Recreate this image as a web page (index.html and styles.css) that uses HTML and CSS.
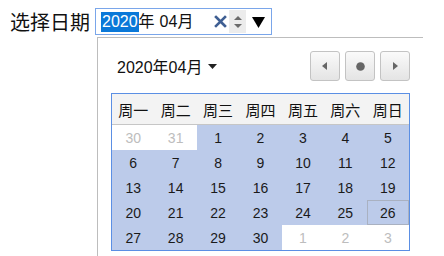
FILE: index.html
```html
<!DOCTYPE html>
<html lang="zh-CN">
<head>
<meta charset="utf-8">
<title>选择日期</title>
<link rel="stylesheet" href="styles.css">
</head>
<body>
<div class="field">
  <label class="label">选择日期</label>
  <div class="picker">
    <div class="input">
      <span class="seg sel">2020</span><span class="seg">年</span><span class="seg sp">04</span><span class="seg">月</span>
      <span class="clear"><svg width="13" height="13" viewBox="0 0 13 13"><path d="M2 2 L11 11 M11 2 L2 11" stroke="#3f5f93" stroke-width="2.6" stroke-linecap="square"/></svg></span>
      <span class="spin"><svg width="10" height="18" viewBox="0 0 10 18"><path d="M1 7 L5 3 L9 7 Z M1 11 L5 15 L9 11 Z" fill="#6b6b6b"/></svg></span>
      <span class="drop"><svg width="13" height="11" viewBox="0 0 13 11"><path d="M0 0 H13 L6.5 11 Z" fill="#000"/></svg></span>
    </div>
    <div class="popup">
      <div class="head">
        <div class="month">2020年04月 <svg class="caret" width="9" height="5" viewBox="0 0 9 5"><path d="M0 0 H9 L4.5 5 Z" fill="#222"/></svg></div>
        <div class="nav">
          <button class="btn"><svg width="6" height="8" viewBox="0 0 6 8"><path d="M5 0 V8 L0 4 Z" fill="#666"/></svg></button>
          <button class="btn"><svg width="9" height="9" viewBox="0 0 9 9"><circle cx="4.5" cy="4.5" r="4.3" fill="#666"/></svg></button>
          <button class="btn"><svg width="6" height="8" viewBox="0 0 6 8"><path d="M1 0 V8 L6 4 Z" fill="#666"/></svg></button>
        </div>
      </div>
      <div class="cal">
        <div class="wk">周一</div><div class="wk">周二</div><div class="wk">周三</div><div class="wk">周四</div><div class="wk">周五</div><div class="wk">周六</div><div class="wk">周日</div>
        <div class="d out">30</div><div class="d out">31</div><div class="d in">1</div><div class="d in">2</div><div class="d in">3</div><div class="d in">4</div><div class="d in">5</div>
        <div class="d in">6</div><div class="d in">7</div><div class="d in">8</div><div class="d in">9</div><div class="d in">10</div><div class="d in">11</div><div class="d in">12</div>
        <div class="d in">13</div><div class="d in">14</div><div class="d in">15</div><div class="d in">16</div><div class="d in">17</div><div class="d in">18</div><div class="d in">19</div>
        <div class="d in">20</div><div class="d in">21</div><div class="d in">22</div><div class="d in">23</div><div class="d in">24</div><div class="d in">25</div><div class="d in today">26</div>
        <div class="d in">27</div><div class="d in">28</div><div class="d in">29</div><div class="d in">30</div><div class="d out">1</div><div class="d out">2</div><div class="d out">3</div>
      </div>
    </div>
  </div>
</div>
</body>
</html>
```
FILE: styles.css
```css
html, body {
  margin: 0;
  padding: 0;
  background: #fff;
  width: 444px;
  height: 256px;
  overflow: hidden;
}
body {
  font-family: "Liberation Sans", "Noto Sans CJK SC", sans-serif;
  color: #111;
}
.field {
  display: flex;
  align-items: center;
  padding: 8px 0 0 10px;
}
.label {
  font-family: "Noto Sans CJK SC", sans-serif;
  font-size: 20px;
  line-height: 27px;
  margin-right: 5px;
  color: #111;
}
.picker {
  position: relative;
}
.input {
  box-sizing: border-box;
  width: 177px;
  height: 27px;
  border: 1px solid #7aa6ea;
  display: flex;
  align-items: center;
  padding-left: 5px;
  font-size: 16px;
  font-family: "Liberation Sans", "Noto Sans CJK SC", sans-serif;
}
.seg {
  line-height: 20px;
}
.seg.sel {
  background: #0a78d8;
  color: #fff;
  padding: 0 1px;
}
.seg.sp {
  margin-left: 5px;
}
.clear {
  margin-left: auto;
  display: flex;
  margin-right: 2px;
}
.spin {
  display: flex;
  align-items: center;
  justify-content: center;
  width: 17px;
  height: 23px;
  background: #ececec;
}
.drop {
  display: flex;
  margin: 1px 6px 0 6px;
}
.popup {
  position: absolute;
  left: 2px;
  top: 29px;
  width: 326px;
  height: 219px;
  box-sizing: border-box;
  background: #fff;
  border-top: 1px solid #bdbdbd;
  border-left: 1px solid #bdbdbd;
  padding: 13px 13px 0 13px;
}
.head {
  display: flex;
  justify-content: space-between;
  align-items: center;
  height: 30px;
  margin-bottom: 12px;
}
.month {
  padding-left: 6px;
  font-size: 16px;
  font-family: "Liberation Sans", "Noto Sans CJK SC", sans-serif;
  display: flex;
  align-items: center;
  color: #111;
}
.caret {
  margin-left: 6px;
}
.nav {
  display: flex;
  gap: 5px;
}
.btn {
  box-sizing: border-box;
  width: 30px;
  height: 30px;
  border: 1px solid #c3c3c3;
  border-radius: 3px;
  background: linear-gradient(#fafafa, #e4e4e4);
  display: flex;
  align-items: center;
  justify-content: center;
  padding: 0;
}
.cal {
  display: grid;
  grid-template-columns: repeat(7, 1fr);
  border: 1px solid #5b8fe4;
  width: 299px;
  box-sizing: border-box;
}
.wk {
  height: 31px;
  box-sizing: border-box;
  border-bottom: 1px solid #c6c6c6;
  background: #f3f3f3;
  display: flex;
  align-items: center;
  justify-content: center;
  font-family: "Noto Sans CJK SC", sans-serif;
  font-size: 15px;
  color: #111;
}
.d {
  height: 25px;
  display: flex;
  align-items: center;
  justify-content: center;
  font-size: 14px;
  color: #1a1a1a;
}
.d.in {
  background: #bccbea;
}
.d.out {
  background: #fff;
  color: #bdbdbd;
}
.d.today {
  box-shadow: inset 0 0 0 1px #a9b1c1;
}
```
